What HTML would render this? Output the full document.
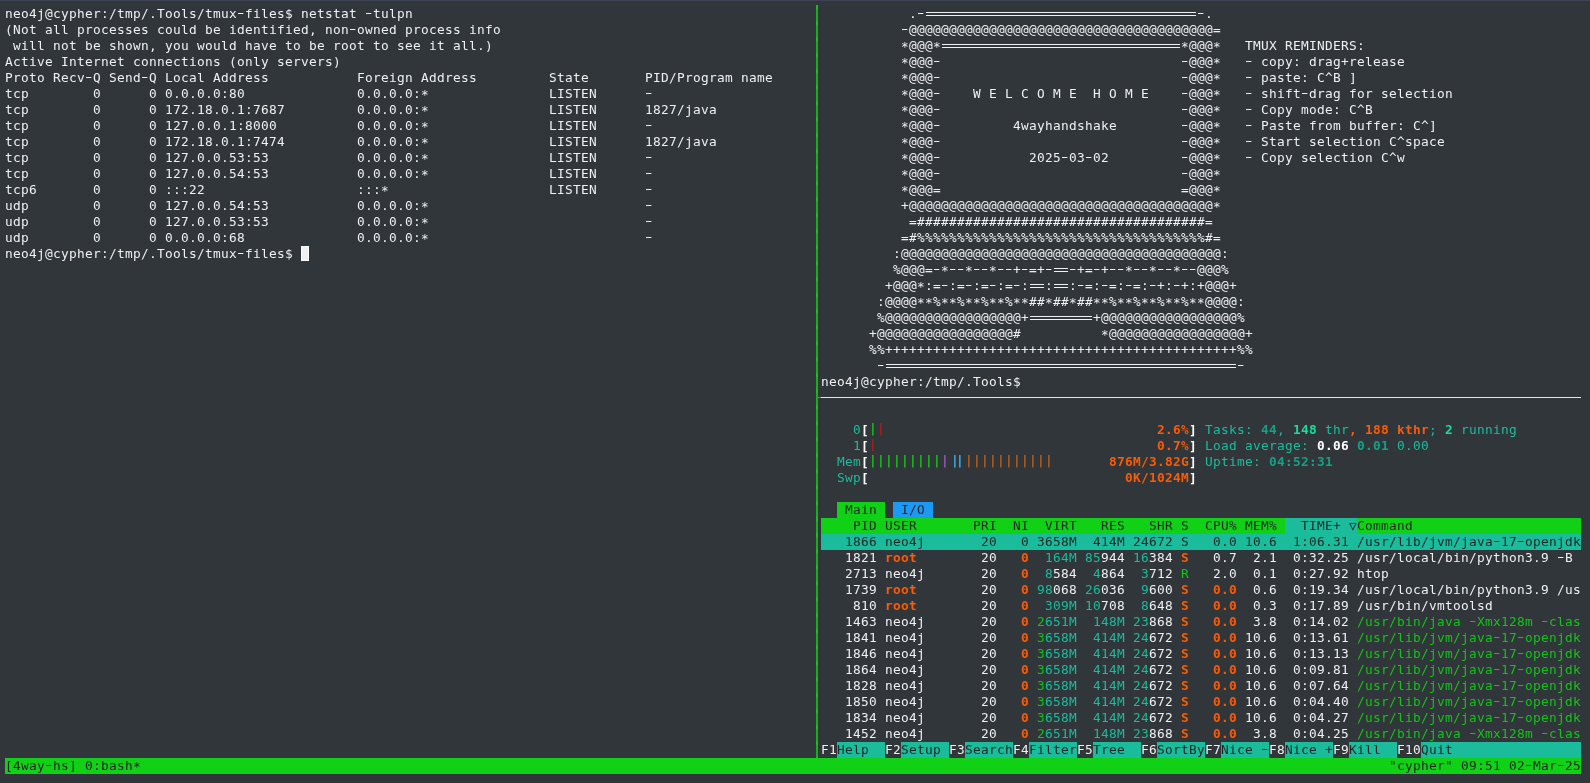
<!DOCTYPE html>
<html lang="en"><head><meta charset="utf-8"><title>tmux - netstat / htop</title>
<style>
:root{--bg:#31363b;--fg:#eff0f1;--green:#11d116;--teal:#1abc9c;--blue:#1d99f3;--dark:#232627;}
html,body{margin:0;padding:0;background:var(--bg);}
body{width:1590px;height:783px;position:relative;overflow:hidden;color:var(--fg);font-family:"DejaVu Sans Mono","Liberation Mono",monospace;font-size:12.8px;letter-spacing:calc(8px - 1ch);}
.scr{position:absolute;left:0;top:0;width:1590px;height:783px;will-change:transform;}
.top{position:absolute;left:0;top:0;width:1590px;height:1px;background:#3c4252;}
.r{position:absolute;height:16px;line-height:16px;white-space:pre;margin:0;}
.b{position:absolute;height:16px;}
.k{color:var(--dark);}
.c{color:#1abc9c;}
.bc{color:#16a085;font-weight:bold;}
.bc2{color:#16a085;font-weight:bold;}
.g{color:#12c417;}
.bg{color:#1cdc9a;font-weight:bold;}
.rd{color:#b01c1c;}
.m{color:#9b59b6;}
.bb{color:#3daee9;font-weight:bold;}
.y{color:#b65f19;}
.bo{color:#f75c0a;font-weight:bold;}
.bw{color:#ffffff;font-weight:bold;}
.br{position:relative;top:-2px;font-weight:bold;}
.as{position:relative;top:1px;}
.hy{display:inline-block;transform:translateY(-1px) scaleX(1.6);}
.lig2{letter-spacing:calc(5px - 1ch);margin-left:2px;margin-right:4px;}
.eq{display:inline-block;height:16px;vertical-align:top;color:transparent;background:linear-gradient(var(--fg),var(--fg)) 1px 6px/calc(100% - 2px) 1px no-repeat,linear-gradient(var(--fg),var(--fg)) 1px 9px/calc(100% - 2px) 1px no-repeat;}
.vline{position:absolute;left:816px;top:5px;width:2px;height:753px;background:repeating-linear-gradient(to bottom,#18be1e 0,#18be1e 4px,#1bad21 4px,#1bad21 16px);}
.hline{position:absolute;left:821px;top:397px;width:760px;height:1px;background:#e4e5e6;}
.hstub{position:absolute;left:818px;top:397px;width:3px;height:1px;background:#14c814;}
.cursor{position:absolute;left:301px;top:246px;width:6px;height:13px;background:#eff0f1;border:1px solid #fff;}

</style></head><body>
<div class="scr"><div class="top"></div>
<div class="b" style="left:837px;top:502px;width:48px;background:var(--green)"></div>
<div class="b" style="left:893px;top:502px;width:40px;background:var(--blue)"></div>
<div class="b" style="left:821px;top:518px;width:760px;background:var(--green)"></div>
<div class="b" style="left:1285px;top:518px;width:72px;background:var(--teal)"></div>
<div class="b" style="left:821px;top:534px;width:760px;background:var(--teal)"></div>
<div class="b" style="left:837px;top:742px;width:48px;background:var(--teal)"></div>
<div class="b" style="left:901px;top:742px;width:48px;background:var(--teal)"></div>
<div class="b" style="left:965px;top:742px;width:48px;background:var(--teal)"></div>
<div class="b" style="left:1029px;top:742px;width:48px;background:var(--teal)"></div>
<div class="b" style="left:1093px;top:742px;width:48px;background:var(--teal)"></div>
<div class="b" style="left:1157px;top:742px;width:48px;background:var(--teal)"></div>
<div class="b" style="left:1221px;top:742px;width:48px;background:var(--teal)"></div>
<div class="b" style="left:1285px;top:742px;width:48px;background:var(--teal)"></div>
<div class="b" style="left:1349px;top:742px;width:48px;background:var(--teal)"></div>
<div class="b" style="left:1421px;top:742px;width:160px;background:var(--teal)"></div>
<div class="b" style="left:5px;top:758px;width:1576px;background:var(--green)"></div>
<div class="vline"></div><div class="hline"></div><div class="hstub"></div><div class="cursor"></div>
<div class="r" style="left:5px;top:6px">neo4j@cypher:/tmp/.Tools/tmux<span class="hy">-</span>files$ netstat <span class="hy">-</span>tulpn</div>
<div class="r" style="left:5px;top:22px">(Not all processes could be identified, non<span class="hy">-</span>owned process info</div>
<div class="r" style="left:5px;top:38px"> will not be shown, you would have to be root to see it all.)</div>
<div class="r" style="left:5px;top:54px">Active Internet connections (only servers)</div>
<div class="r" style="left:5px;top:70px">Proto Recv<span class="hy">-</span>Q Send<span class="hy">-</span>Q Local Address           Foreign Address         State       PID/Program name</div>
<div class="r" style="left:5px;top:86px">tcp        0      0 0.0.0.0:80              0.0.0.0:<span class="as">*</span>               LISTEN      <span class="hy">-</span></div>
<div class="r" style="left:5px;top:102px">tcp        0      0 172.18.0.1:7687         0.0.0.0:<span class="as">*</span>               LISTEN      1827/java</div>
<div class="r" style="left:5px;top:118px">tcp        0      0 127.0.0.1:8000          0.0.0.0:<span class="as">*</span>               LISTEN      <span class="hy">-</span></div>
<div class="r" style="left:5px;top:134px">tcp        0      0 172.18.0.1:7474         0.0.0.0:<span class="as">*</span>               LISTEN      1827/java</div>
<div class="r" style="left:5px;top:150px">tcp        0      0 127.0.0.53:53           0.0.0.0:<span class="as">*</span>               LISTEN      <span class="hy">-</span></div>
<div class="r" style="left:5px;top:166px">tcp        0      0 127.0.0.54:53           0.0.0.0:<span class="as">*</span>               LISTEN      <span class="hy">-</span></div>
<div class="r" style="left:5px;top:182px">tcp6       0      0 :::22                   :::<span class="as">*</span>                    LISTEN      <span class="hy">-</span></div>
<div class="r" style="left:5px;top:198px">udp        0      0 127.0.0.54:53           0.0.0.0:<span class="as">*</span>                           <span class="hy">-</span></div>
<div class="r" style="left:5px;top:214px">udp        0      0 127.0.0.53:53           0.0.0.0:<span class="as">*</span>                           <span class="hy">-</span></div>
<div class="r" style="left:5px;top:230px">udp        0      0 0.0.0.0:68              0.0.0.0:<span class="as">*</span>                           <span class="hy">-</span></div>
<div class="r" style="left:5px;top:246px">neo4j@cypher:/tmp/.Tools/tmux<span class="hy">-</span>files$ </div>
<div class="r" style="left:821px;top:6px">           .<span class="hy">-</span><span class="eq">==================================</span><span class="hy">-</span>.</div>
<div class="r" style="left:821px;top:22px">          <span class="hy">-</span>@@@@@@@@@@@@@@@@@@@@@@@@@@@@@@@@@@@@@@=</div>
<div class="r" style="left:821px;top:38px">          <span class="as">*</span>@@@<span class="as">*</span><span class="eq">==============================</span><span class="as">*</span>@@@<span class="as">*</span>   TMUX REMINDERS:</div>
<div class="r" style="left:821px;top:54px">          <span class="as">*</span>@@@<span class="hy">-</span>                              <span class="hy">-</span>@@@<span class="as">*</span>   <span class="hy">-</span> copy: drag+release</div>
<div class="r" style="left:821px;top:70px">          <span class="as">*</span>@@@<span class="hy">-</span>                              <span class="hy">-</span>@@@<span class="as">*</span>   <span class="hy">-</span> paste: C^B ]</div>
<div class="r" style="left:821px;top:86px">          <span class="as">*</span>@@@<span class="hy">-</span>    W E L C O M E  H O M E    <span class="hy">-</span>@@@<span class="as">*</span>   <span class="hy">-</span> shift<span class="hy">-</span>drag for selection</div>
<div class="r" style="left:821px;top:102px">          <span class="as">*</span>@@@<span class="hy">-</span>                              <span class="hy">-</span>@@@<span class="as">*</span>   <span class="hy">-</span> Copy mode: C^B</div>
<div class="r" style="left:821px;top:118px">          <span class="as">*</span>@@@<span class="hy">-</span>         4wayhandshake        <span class="hy">-</span>@@@<span class="as">*</span>   <span class="hy">-</span> Paste from buffer: C^]</div>
<div class="r" style="left:821px;top:134px">          <span class="as">*</span>@@@<span class="hy">-</span>                              <span class="hy">-</span>@@@<span class="as">*</span>   <span class="hy">-</span> Start selection C^space</div>
<div class="r" style="left:821px;top:150px">          <span class="as">*</span>@@@<span class="hy">-</span>           2025<span class="hy">-</span>03<span class="hy">-</span>02         <span class="hy">-</span>@@@<span class="as">*</span>   <span class="hy">-</span> Copy selection C^w</div>
<div class="r" style="left:821px;top:166px">          <span class="as">*</span>@@@<span class="hy">-</span>                              <span class="hy">-</span>@@@<span class="as">*</span></div>
<div class="r" style="left:821px;top:182px">          <span class="as">*</span>@@@=                              =@@@<span class="as">*</span></div>
<div class="r" style="left:821px;top:198px">          +@@@@@@@@@@@@@@@@@@@@@@@@@@@@@@@@@@@@@@<span class="as">*</span></div>
<div class="r" style="left:821px;top:214px">           =####################################=</div>
<div class="r" style="left:821px;top:230px">          =#%%%%%%%%%%%%%%%%%%%%%%%%%%%%%%%%%%%%#=</div>
<div class="r" style="left:821px;top:246px">         :@@@@@@@@@@@@@@@@@@@@@@@@@@@@@@@@@@@@@@@@:</div>
<div class="r" style="left:821px;top:262px">         %@@@=<span class="hy">-</span><span class="as">*</span><span class="hy">-</span><span class="hy">-</span><span class="as">*</span><span class="hy">-</span><span class="hy">-</span><span class="as">*</span><span class="hy">-</span><span class="hy">-</span>+<span class="hy">-</span>=+<span class="hy">-</span><span class="eq">==</span><span class="hy">-</span>+=<span class="hy">-</span>+<span class="hy">-</span><span class="hy">-</span><span class="as">*</span><span class="hy">-</span><span class="hy">-</span><span class="as">*</span><span class="hy">-</span><span class="hy">-</span><span class="as">*</span><span class="hy">-</span><span class="hy">-</span>@@@%</div>
<div class="r" style="left:821px;top:278px">        +@@@<span class="as">*</span>:=<span class="hy">-</span>:=<span class="hy">-</span>:=<span class="hy">-</span>:=<span class="hy">-</span>:<span class="eq">==</span>:<span class="eq">==</span>:<span class="hy">-</span>=:<span class="hy">-</span>=:<span class="hy">-</span>=:<span class="hy">-</span>+:<span class="hy">-</span>+:+@@@+</div>
<div class="r" style="left:821px;top:294px">       :@@@@<span class="as">**</span>%<span class="as">**</span>%<span class="as">**</span>%<span class="as">**</span>%<span class="as">**</span>##<span class="as">*</span>##<span class="as">*</span>##<span class="as">**</span>%<span class="as">**</span>%<span class="as">**</span>%<span class="as">**</span>%<span class="as">**</span>@@@@:</div>
<div class="r" style="left:821px;top:310px">       %@@@@@@@@@@@@@@@@@+<span class="eq">========</span>+@@@@@@@@@@@@@@@@@%</div>
<div class="r" style="left:821px;top:326px">      +@@@@@@@@@@@@@@@@@#          <span class="as">*</span>@@@@@@@@@@@@@@@@@+</div>
<div class="r" style="left:821px;top:342px">      %%++++++++++++++++++++++++++++++++++++++++++++%%</div>
<div class="r" style="left:821px;top:358px">       <span class="hy">-</span><span class="eq">============================================</span><span class="hy">-</span></div>
<div class="r" style="left:821px;top:374px">neo4j@cypher:/tmp/.Tools$ </div>
<div class="r" style="left:821px;top:422px"><span class="c">    0</span><span class="bw">[</span><span class="g br">|</span><span class="rd br">|</span>                                  <span class="bo">2.6%</span><span class="bw">]</span><span class="c"> Tasks: </span><span class="bc">44</span><span class="c">, </span><span class="bg">148</span><span class="c"> thr</span><span class="bo">, 188 kthr</span><span class="c">; </span><span class="bg">2</span><span class="c"> running</span></div>
<div class="r" style="left:821px;top:438px"><span class="c">    1</span><span class="bw">[</span><span class="rd br">|</span>                                   <span class="bo">0.7%</span><span class="bw">]</span><span class="c"> Load average: </span><span class="bw">0.06</span> <span class="bc2">0.01</span> <span class="c">0.00</span></div>
<div class="r" style="left:821px;top:454px"><span class="c">  Mem</span><span class="bw">[</span><span class="g br">|||||||||</span><span class="m br">|</span><span class="bb br lig2">||</span><span class="y br">|||||||||||</span>       <span class="bo">876M/3.82G</span><span class="bw">]</span><span class="c"> Uptime: </span><span class="bc2">04:52:31</span></div>
<div class="r" style="left:821px;top:470px"><span class="c">  Swp</span><span class="bw">[</span>                                <span class="bo">0K/1024M</span><span class="bw">]</span></div>
<div class="r" style="left:821px;top:502px"><span class="k">   Main   I/O </span></div>
<div class="r" style="left:821px;top:518px"><span class="k">    PID USER       PRI  NI  VIRT   RES   SHR S  CPU% MEM%   TIME+ ▽Command</span></div>
<div class="r" style="left:821px;top:534px"><span class="k">   1866 neo4j       20   0 3658M  414M 24672 S   0.0 10.6  1:06.31 /usr/lib/jvm/java<span class="hy">-</span>17<span class="hy">-</span>openjdk</span></div>
<div class="r" style="left:821px;top:550px">   1821 <span class="bo">root      </span>  20 <span class="bo">  0</span>  <span class="c">164M</span> <span class="c">85</span>944 <span class="c">16</span>384 <span class="bo">S</span>   0.7  2.1  0:32.25 /usr/local/bin/python3.9 <span class="hy">-</span>B</div>
<div class="r" style="left:821px;top:566px">   2713 neo4j       20 <span class="bo">  0</span>  <span class="c">8</span>584  <span class="c">4</span>864  <span class="c">3</span>712 <span class="g">R</span>   2.0  0.1  0:27.92 htop</div>
<div class="r" style="left:821px;top:582px">   1739 <span class="bo">root      </span>  20 <span class="bo">  0</span> <span class="c">98</span>068 <span class="c">26</span>036  <span class="c">9</span>600 <span class="bo">S</span> <span class="bo">  0.0</span>  0.6  0:19.34 /usr/local/bin/python3.9 /us</div>
<div class="r" style="left:821px;top:598px">    810 <span class="bo">root      </span>  20 <span class="bo">  0</span>  <span class="c">309M</span> <span class="c">10</span>708  <span class="c">8</span>648 <span class="bo">S</span> <span class="bo">  0.0</span>  0.3  0:17.89 /usr/bin/vmtoolsd</div>
<div class="r" style="left:821px;top:614px">   1463 neo4j       20 <span class="bo">  0</span> <span class="g">2</span><span class="c">651M</span>  <span class="c">148M</span> <span class="c">23</span>868 <span class="bo">S</span> <span class="bo">  0.0</span>  3.8  0:14.02 <span class="g">/usr/bin/java <span class="hy">-</span>Xmx128m <span class="hy">-</span>clas</span></div>
<div class="r" style="left:821px;top:630px">   1841 neo4j       20 <span class="bo">  0</span> <span class="g">3</span><span class="c">658M</span>  <span class="c">414M</span> <span class="c">24</span>672 <span class="bo">S</span> <span class="bo">  0.0</span> 10.6  0:13.61 <span class="g">/usr/lib/jvm/java<span class="hy">-</span>17<span class="hy">-</span>openjdk</span></div>
<div class="r" style="left:821px;top:646px">   1846 neo4j       20 <span class="bo">  0</span> <span class="g">3</span><span class="c">658M</span>  <span class="c">414M</span> <span class="c">24</span>672 <span class="bo">S</span> <span class="bo">  0.0</span> 10.6  0:13.13 <span class="g">/usr/lib/jvm/java<span class="hy">-</span>17<span class="hy">-</span>openjdk</span></div>
<div class="r" style="left:821px;top:662px">   1864 neo4j       20 <span class="bo">  0</span> <span class="g">3</span><span class="c">658M</span>  <span class="c">414M</span> <span class="c">24</span>672 <span class="bo">S</span> <span class="bo">  0.0</span> 10.6  0:09.81 <span class="g">/usr/lib/jvm/java<span class="hy">-</span>17<span class="hy">-</span>openjdk</span></div>
<div class="r" style="left:821px;top:678px">   1828 neo4j       20 <span class="bo">  0</span> <span class="g">3</span><span class="c">658M</span>  <span class="c">414M</span> <span class="c">24</span>672 <span class="bo">S</span> <span class="bo">  0.0</span> 10.6  0:07.64 <span class="g">/usr/lib/jvm/java<span class="hy">-</span>17<span class="hy">-</span>openjdk</span></div>
<div class="r" style="left:821px;top:694px">   1850 neo4j       20 <span class="bo">  0</span> <span class="g">3</span><span class="c">658M</span>  <span class="c">414M</span> <span class="c">24</span>672 <span class="bo">S</span> <span class="bo">  0.0</span> 10.6  0:04.40 <span class="g">/usr/lib/jvm/java<span class="hy">-</span>17<span class="hy">-</span>openjdk</span></div>
<div class="r" style="left:821px;top:710px">   1834 neo4j       20 <span class="bo">  0</span> <span class="g">3</span><span class="c">658M</span>  <span class="c">414M</span> <span class="c">24</span>672 <span class="bo">S</span> <span class="bo">  0.0</span> 10.6  0:04.27 <span class="g">/usr/lib/jvm/java<span class="hy">-</span>17<span class="hy">-</span>openjdk</span></div>
<div class="r" style="left:821px;top:726px">   1452 neo4j       20 <span class="bo">  0</span> <span class="g">2</span><span class="c">651M</span>  <span class="c">148M</span> <span class="c">23</span>868 <span class="bo">S</span> <span class="bo">  0.0</span>  3.8  0:04.25 <span class="g">/usr/bin/java <span class="hy">-</span>Xmx128m <span class="hy">-</span>clas</span></div>
<div class="r" style="left:821px;top:742px">F1<span class="k">Help  </span>F2<span class="k">Setup </span>F3<span class="k">Search</span>F4<span class="k">Filter</span>F5<span class="k">Tree  </span>F6<span class="k">SortBy</span>F7<span class="k">Nice <span class="hy">-</span></span>F8<span class="k">Nice +</span>F9<span class="k">Kill  </span>F10<span class="k">Quit</span></div>
<div class="r" style="left:5px;top:758px"><span class="k">[4way<span class="hy">-</span>hs] 0:bash<span class="as">*</span></span></div>
<div class="r" style="left:1389px;top:758px"><span class="k">"cypher" 09:51 02<span class="hy">-</span>Mar<span class="hy">-</span>25</span></div>
</div></body></html>
